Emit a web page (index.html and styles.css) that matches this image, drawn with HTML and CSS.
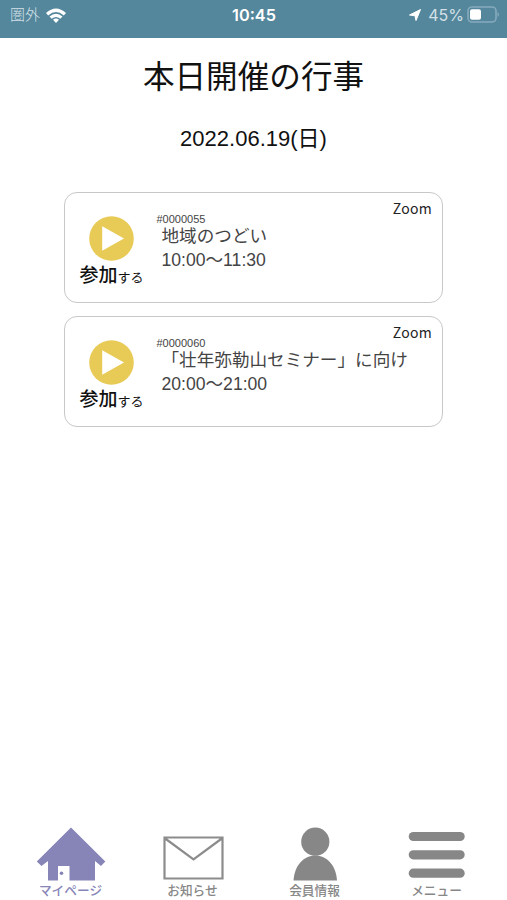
FILE: index.html
```html
<!DOCTYPE html>
<html lang="ja">
<head>
  <meta charset="UTF-8">
  <meta name="viewport" content="width=device-width, initial-scale=1.0">
  <title>本日開催の行事</title>
  <link rel="stylesheet" href="styles.css">
</head>
<body>
  <header class="status-bar">
    <div class="status-left">
      <span>圏外</span>
      <svg class="wifi" viewBox="0 0 20 15">
        <path d="M0 5Q10 -4 20 5L17.8 7.4Q10 0.8 2.2 7.4Z"/>
        <path d="M3.5 8.5Q10 2.9 16.5 8.5L14.3 10.8Q10 7.2 5.7 10.8Z"/>
        <path d="M7 11.8Q10 9.2 13 11.8L10 15Z"/>
      </svg>
    </div>
    <div class="status-time">10:45</div>
    <div class="status-right">
      <svg class="location" viewBox="0 0 12 12">
        <path d="M11.5 0.5L7 11.5L6 6.8L0.5 6Z" stroke="#fff" stroke-linejoin="round"/>
      </svg>
      <span>45%</span>
      <svg class="battery" viewBox="0 0 33 17">
        <rect x="1" y="1" width="28" height="15" rx="4" fill="none" stroke="#86aabd" stroke-width="1.6"/>
        <rect x="3" y="3.2" width="11" height="10.6" rx="2"/>
        <path d="M30.5 6Q33.5 8.5 30.5 11Z" fill="#86aabd"/>
      </svg>
    </div>
  </header>

  <main>
    <h1>本日開催の行事</h1>
    <p class="date">2022.06.19(日)</p>

    <section class="events">
      <article class="event">
        <a class="join">
          <svg class="play" viewBox="0 0 45 45">
            <circle cx="22.5" cy="22.5" r="22.3" fill="#e8ca56"/>
            <path d="M13.2 10.2L35 22.5L13.2 34.8Z" fill="#fff"/>
          </svg>
          <span class="join-label">参加<small>する</small></span>
        </a>
        <div class="event-body">
          <div class="event-id">#0000055</div>
          <div class="event-name">地域のつどい</div>
          <div class="event-hours">10:00～11:30</div>
        </div>
        <span class="place">Zoom</span>
      </article>

      <article class="event">
        <a class="join">
          <svg class="play" viewBox="0 0 45 45">
            <circle cx="22.5" cy="22.5" r="22.3" fill="#e8ca56"/>
            <path d="M13.2 10.2L35 22.5L13.2 34.8Z" fill="#fff"/>
          </svg>
          <span class="join-label">参加<small>する</small></span>
        </a>
        <div class="event-body">
          <div class="event-id">#0000060</div>
          <div class="event-name">「壮年弥勒山セミナー」に向け</div>
          <div class="event-hours">20:00～21:00</div>
        </div>
        <span class="place">Zoom</span>
      </article>
    </section>
  </main>

  <nav class="tabs">
    <a class="tab active">
      <svg viewBox="0 0 70 54">
        <path d="M35 0.5L69.3 34.5L65 39L59 34V53.5H33.5V39H22V53.5H12V34L5.5 39L0.8 34.5Z"/>
        <circle cx="25.5" cy="46.3" r="1.8"/>
      </svg>
      <span>マイページ</span>
    </a>
    <a class="tab">
      <svg viewBox="0 0 70 54">
        <path d="M6.5 10.5H64.5V51.5H6.5ZM6.5 11L35.5 32.5L64.5 11" fill="none" stroke="#8c8c8c" stroke-width="2.2"/>
      </svg>
      <span>お知らせ</span>
    </a>
    <a class="tab">
      <svg viewBox="0 0 70 54">
        <circle cx="35.3" cy="14.7" r="14.1"/>
        <path d="M13.5 53.5C14.5 38 24 28.5 35.3 28.5S56 38 57 53.5Z"/>
      </svg>
      <span>会員情報</span>
    </a>
    <a class="tab">
      <svg viewBox="0 0 70 54">
        <rect x="6.7" y="4.9" width="56" height="9.2" rx="4.6"/>
        <rect x="6.7" y="23.2" width="56" height="9.2" rx="4.6"/>
        <rect x="6.7" y="41.6" width="56" height="9.2" rx="4.6"/>
      </svg>
      <span>メニュー</span>
    </a>
  </nav>
</body>
</html>
```

FILE: styles.css
```css
* {
  margin: 0;
  padding: 0;
  box-sizing: border-box;
}

body {
  height: 100vh;
  display: flex;
  flex-direction: column;
  overflow: hidden;
  background: #fff;
  color: #111;
  font-family: "Liberation Sans", "Noto Sans CJK JP", sans-serif;
}

svg {
  display: block;
  fill: currentColor;
}

/* status bar */
.status-bar {
  display: grid;
  grid-template-columns: 1fr auto 1fr;
  height: 38px;
  padding: 0 7px 8px 10px;
  align-items: center;
  background: #54869c;
  color: #fff;
  font-family: Inter, "Noto Sans CJK JP", sans-serif;
  font-size: 16px;
  line-height: 30px;
}

.status-left,
.status-right {
  display: flex;
  align-items: center;
  color: #d3e1e7;
}

.status-left {
  gap: 6px;
  font-size: 15px;
  font-weight: 300;
}

.status-right {
  justify-content: flex-end;
}

.status-time {
  margin-right: 2px;
  font-weight: 600;
  font-size: 16.3px;
}

.wifi {
  width: 20px;
  height: 15px;
  color: #fff;
}

.location {
  width: 12px;
  height: 12px;
  margin-right: 7px;
  color: #fff;
}

.battery {
  width: 33px;
  height: 17px;
  margin: -1px 0 0 3px;
  color: #fff;
}

/* events of the day */
main {
  flex: 1;
}

h1 {
  margin-top: 19px;
  font-size: 31.6px;
  font-weight: 400;
  line-height: 40px;
  text-align: center;
}

.date {
  margin-top: 22px;
  font-size: 22px;
  line-height: 40px;
  text-align: center;
}

.events {
  display: grid;
  grid-template-columns: 100%;
  gap: 13px;
  width: 379px;
  margin: 33px auto 0;
}

.event {
  display: flex;
  justify-content: space-between;
  height: 111px;
  padding: 0 10px 0 14.5px;
  border: 1px solid #c8c8c8;
  border-radius: 13px;
}

.join {
  display: flex;
  flex-direction: column;
  align-items: center;
  width: 64px;
  padding-top: 23px;
}

.play {
  width: 45px;
  height: 45px;
}

.join-label {
  font-size: 19px;
  font-weight: 500;
  line-height: 26px;
  white-space: nowrap;
  font-family: "Noto Sans CJK JP", sans-serif;
}

.join-label small {
  font-size: 13px;
  font-weight: 400;
}

.event-body {
  flex: 1;
  min-width: 0;
  padding: 20px 0 0 13px;
  color: #444;
  white-space: nowrap;
}

.event-id {
  font-size: 11px;
  line-height: 12px;
}

.event-name,
.event-hours {
  padding-left: 5px;
  font-size: 17.6px;
  line-height: 24px;
}

.event-name {
  margin-top: -1px;
}

.place {
  padding-top: 5px;
  color: #222;
  font-family: "Noto Sans CJK JP", sans-serif;
  font-size: 14px;
  line-height: 20px;
  letter-spacing: 0.3px;
}

/* bottom tabs */
.tabs {
  display: grid;
  grid-template-columns: repeat(4, 122px);
  justify-content: center;
  height: 73px;
}

.tab {
  display: flex;
  flex-direction: column;
  align-items: center;
  color: #878787;
  font-family: "Noto Sans CJK JP", sans-serif;
  font-size: 12.7px;
  font-weight: 500;
  line-height: 18px;
}

.tab svg {
  width: 70px;
  height: 54px;
}

.tab.active {
  color: #8785b8;
}
```
